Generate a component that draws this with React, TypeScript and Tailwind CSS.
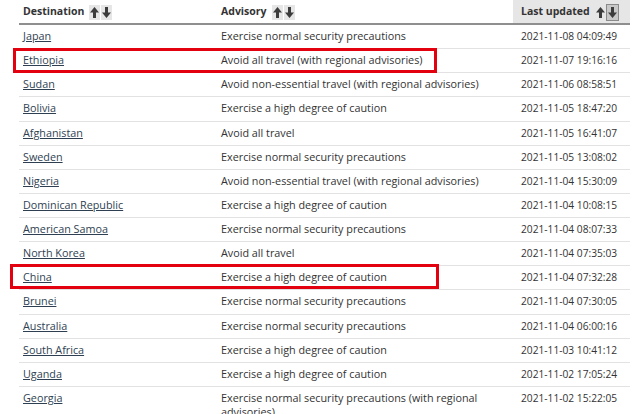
import React from "react";

const rows: [string, string, string][] = [
  ["Japan", "Exercise normal security precautions", "2021-11-08 04:09:49"],
  ["Ethiopia", "Avoid all travel (with regional advisories)", "2021-11-07 19:16:16"],
  ["Sudan", "Avoid non-essential travel (with regional advisories)", "2021-11-06 08:58:51"],
  ["Bolivia", "Exercise a high degree of caution", "2021-11-05 18:47:20"],
  ["Afghanistan", "Avoid all travel", "2021-11-05 16:41:07"],
  ["Sweden", "Exercise normal security precautions", "2021-11-05 13:08:02"],
  ["Nigeria", "Avoid non-essential travel (with regional advisories)", "2021-11-04 15:30:09"],
  ["Dominican Republic", "Exercise a high degree of caution", "2021-11-04 10:08:15"],
  ["American Samoa", "Exercise normal security precautions", "2021-11-04 08:07:33"],
  ["North Korea", "Avoid all travel", "2021-11-04 07:35:03"],
  ["China", "Exercise a high degree of caution", "2021-11-04 07:32:28"],
  ["Brunei", "Exercise normal security precautions", "2021-11-04 07:30:05"],
  ["Australia", "Exercise normal security precautions", "2021-11-04 06:00:16"],
  ["South Africa", "Exercise a high degree of caution", "2021-11-03 10:41:12"],
  ["Uganda", "Exercise a high degree of caution", "2021-11-02 17:05:24"],
  ["Georgia", "Exercise normal security precautions (with regional advisories)", "2021-11-02 15:22:05"],
];

function Arrow({ down, active }: { down?: boolean; active?: boolean }) {
  return (
    <span
      className={
        "inline-flex h-[15px] w-[11px] items-center justify-center " +
        (active ? "bg-[#c8c8c8] outline outline-1 outline-[#8a8a8a]" : "bg-[#e6e6e6]")
      }
    >
      <svg width="9" height="11" viewBox="0 0 9 11">
        {down ? (
          <path d="M3 0 H6 V5.5 H9 L4.5 11 L0 5.5 H3 Z" fill="#3c3c3c" />
        ) : (
          <path d="M3 11 H6 V5.5 H9 L4.5 0 L0 5.5 H3 Z" fill="#3c3c3c" />
        )}
      </svg>
    </span>
  );
}

function Sort({ active }: { active?: boolean }) {
  return (
    <span className="ml-[5px] inline-flex items-center gap-[1px] align-middle">
      <Arrow />
      <Arrow down active={active} />
    </span>
  );
}

export default function App() {
  return (
    <div
      className="relative h-[414px] w-[640px] overflow-hidden bg-white text-[10.8px] text-[#333]"
      style={{ fontFamily: '"Open Sans", "Noto Sans", sans-serif' }}
    >
      <div className="relative ml-[19px] w-[611px]">
        <table className="w-full border-collapse">
          <thead>
            <tr className="h-[24px] border-b-2 border-[#8f8f8f]">
              <th className="w-[198px] px-[4px] pt-[1px] text-left text-[10.5px] font-bold">
                Destination<Sort />
              </th>
              <th className="w-[296px] px-[4px] pt-[1px] text-left text-[10.5px] font-bold">
                Advisory<Sort />
              </th>
              <th className="bg-[#e6e6e6] px-[4px] pl-[8px] pt-[1px] text-left text-[10.5px] font-bold">
                Last updated<Sort active />
              </th>
            </tr>
          </thead>
          <tbody>
            {rows.map(([d, a, t]) => (
              <tr key={d} className="border-b border-[#e2e2e2] align-top">
                <td className="px-[4px] pb-[5.13px] pt-[4px] leading-[14px]">
                  <a href="#" className="text-[#2f3f52] underline decoration-[#2f3f52]">
                    {d}
                  </a>
                </td>
                <td className="px-[4px] pb-[5.13px] pt-[4px] leading-[14px]">{a}</td>
                <td className="px-[4px] pb-[5.13px] pl-[8px] pt-[4px] text-[10.2px] leading-[14px]">{t}</td>
              </tr>
            ))}
          </tbody>
        </table>
      </div>
      <div className="absolute left-[13px] top-[48px] h-[25px] w-[424px] border-[3px] border-[#e3000f]" />
      <div className="absolute left-[10px] top-[264px] h-[25px] w-[429px] border-[3px] border-[#e3000f]" />
    </div>
  );
}
